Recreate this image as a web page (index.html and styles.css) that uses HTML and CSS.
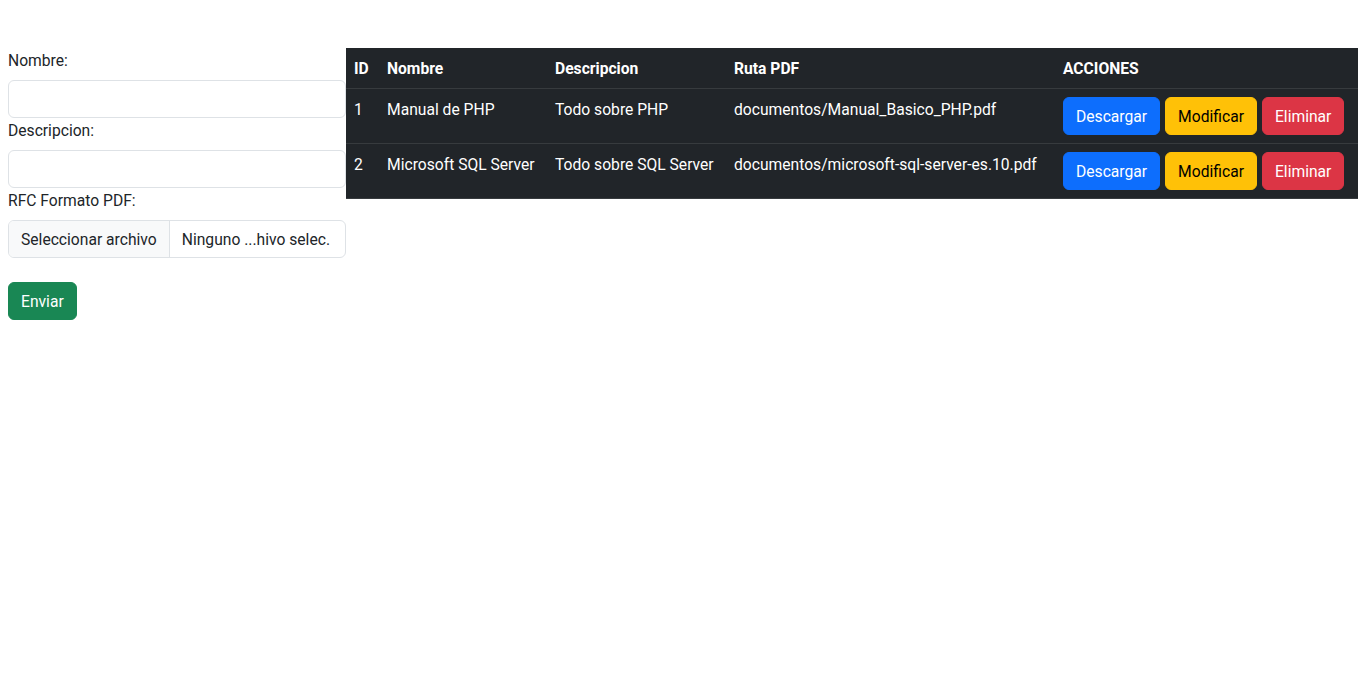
FILE: index.html
```html
<!DOCTYPE html>
<html lang="es">
<head>
<meta charset="utf-8">
<title>Documentos</title>
<link rel="stylesheet" href="styles.css">
</head>
<body>
<div class="page">
  <form class="form-col">
    <label class="form-label" for="nombre">Nombre:</label>
    <input class="form-control" id="nombre" type="text">
    <label class="form-label" for="desc">Descripcion:</label>
    <input class="form-control" id="desc" type="text">
    <label class="form-label">RFC Formato PDF:</label>
    <div class="file-control">
      <span class="file-btn">Seleccionar archivo</span>
      <span class="file-name">Ninguno ...hivo selec.</span>
    </div>
    <button class="btn btn-success btn-send" type="button">Enviar</button>
  </form>
  <div class="table-col">
    <table class="table-dark">
      <colgroup>
        <col class="c-id"><col class="c-nombre"><col class="c-desc"><col class="c-ruta"><col class="c-acc">
      </colgroup>
      <thead>
        <tr><th>ID</th><th>Nombre</th><th>Descripcion</th><th>Ruta PDF</th><th>ACCIONES</th></tr>
      </thead>
      <tbody>
        <tr>
          <td>1</td><td>Manual de PHP</td><td>Todo sobre PHP</td><td>documentos/Manual_Basico_PHP.pdf</td>
          <td class="actions"><button class="btn btn-primary" type="button">Descargar</button><button class="btn btn-warning" type="button">Modificar</button><button class="btn btn-danger" type="button">Eliminar</button></td>
        </tr>
        <tr>
          <td>2</td><td>Microsoft SQL Server</td><td>Todo sobre SQL Server</td><td>documentos/microsoft-sql-server-es.10.pdf</td>
          <td class="actions"><button class="btn btn-primary" type="button">Descargar</button><button class="btn btn-warning" type="button">Modificar</button><button class="btn btn-danger" type="button">Eliminar</button></td>
        </tr>
      </tbody>
    </table>
  </div>
</div>
</body>
</html>
```
FILE: styles.css
```css
* { box-sizing: border-box; }
html, body { margin: 0; padding: 0; background: #fff; }
body {
  font-family: Roboto, "Liberation Sans", sans-serif;
  font-size: 15.65px;
  line-height: 24px;
  color: #212529;
}
.page {
  display: flex;
  align-items: flex-start;
  padding: 48px 8px 0;
}
.form-col {
  width: 338px;
  flex: none;
  display: flex;
  flex-direction: column;
  align-items: flex-start;
}
.form-label {
  display: block;
  margin-bottom: 8px;
  height: 24px;
  padding-top: 1px;
  line-height: 23px;
}
.form-control {
  display: block;
  width: 100%;
  height: 38px;
  padding: 6px 12px;
  font: inherit;
  color: #212529;
  background: #fff;
  border: 1px solid #dee2e6;
  border-radius: 6px;
  margin: 0;
}
.file-control {
  display: flex;
  width: 100%;
  height: 38px;
  border: 1px solid #dee2e6;
  border-radius: 6px;
  overflow: hidden;
}
.file-btn {
  padding: 7px 12px 5px;
  background: #f8f9fa;
  border-right: 1px solid #dee2e6;
  white-space: nowrap;
}
.file-name {
  padding: 7px 12px 5px;
  white-space: nowrap;
  overflow: hidden;
}
.btn {
  display: inline-block;
  height: 38px;
  padding: 7px 12px 5px;
  font: inherit;
  line-height: 24px;
  border: 1px solid transparent;
  border-radius: 6px;
  cursor: pointer;
  white-space: nowrap;
}
.btn + .btn { margin-left: 5px; }
.btn-send { margin-top: 24px; }
.btn-success { background: #198754; border-color: #198754; color: #fff; }
.btn-primary { background: #0d6efd; border-color: #0d6efd; color: #fff; }
.btn-warning { background: #ffc107; border-color: #ffc107; color: #000; }
.btn-danger { background: #dc3545; border-color: #dc3545; color: #fff; }

.table-col { flex: 1; min-width: 0; }
.table-dark {
  width: 100%;
  table-layout: fixed;
  border-collapse: collapse;
  background: #212529;
  color: #fff;
}
.c-id { width: 33px; }
.c-nombre { width: 168px; }
.c-desc { width: 179px; }
.c-ruta { width: 329px; }
.c-acc { width: auto; }
.table-dark th, .table-dark td {
  padding: 9px 8px 7px;
  text-align: left;
  border-bottom: 1px solid #373b3e;
  white-space: nowrap;
  vertical-align: top;
}
.table-dark th { font-weight: 700; vertical-align: bottom; }
.table-dark td.actions { padding: 8px; font-size: 0; }
.actions .btn { font-size: 15.65px; }
```
